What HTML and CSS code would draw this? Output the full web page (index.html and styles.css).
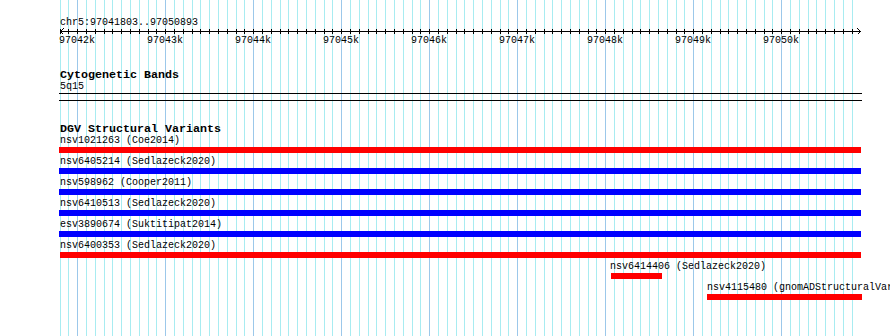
FILE: index.html
```html
<!DOCTYPE html>
<html lang="en">
<head>
    <meta charset="UTF-8">
    <meta name="viewport" content="width=device-width, initial-scale=1.0">
    <title>chr5:97041803..97050893</title>
    <link rel="stylesheet" href="styles.css">
</head>
<body>
    <div class="view">
        <div class="grid" id="grid"></div>

        <div class="ruler">
            <div class="locus">chr5:97041803..97050893</div>
            <svg class="scale" id="scale" width="890" height="7"></svg>
            <div class="scale-labels" id="scaleLabels"></div>
        </div>

        <div class="track bands">
            <div class="track-title">Cytogenetic Bands</div>
            <div class="band-name">5q15</div>
            <div class="band"></div>
        </div>

        <div class="track dgv">
            <div class="track-title">DGV Structural Variants</div>
            <div class="feature">
                <div class="feature-label">nsv1021263 (Coe2014)</div>
                <div class="bar loss" style="margin-left:-1px; width:802px"></div>
            </div>
            <div class="feature">
                <div class="feature-label">nsv6405214 (Sedlazeck2020)</div>
                <div class="bar gain" style="margin-left:-1px; width:802px"></div>
            </div>
            <div class="feature">
                <div class="feature-label">nsv598962 (Cooper2011)</div>
                <div class="bar gain" style="margin-left:-1px; width:802px"></div>
            </div>
            <div class="feature">
                <div class="feature-label">nsv6410513 (Sedlazeck2020)</div>
                <div class="bar gain" style="margin-left:-1px; width:802px"></div>
            </div>
            <div class="feature">
                <div class="feature-label">esv3890674 (Suktitipat2014)</div>
                <div class="bar gain" style="margin-left:-1px; width:802px"></div>
            </div>
            <div class="feature">
                <div class="feature-label">nsv6400353 (Sedlazeck2020)</div>
                <div class="bar loss" style="margin-left:0; width:801px"></div>
            </div>
            <div class="feature">
                <div class="feature-label" style="margin-left:550px">nsv6414406 (Sedlazeck2020)</div>
                <div class="bar loss" style="margin-left:551px; width:51px"></div>
            </div>
            <div class="feature">
                <div class="feature-label" style="margin-left:647px">nsv4115480 (gnomADStructuralVariants)</div>
                <div class="bar loss" style="margin-left:647px; width:155px"></div>
            </div>
        </div>
    </div>

    <script>
        // view: 97041800 sits at x=60, 0.088 px per bp
        const START = 97041800;
        const END = 97050893;
        const LEFT = 60;
        const SCALE = 0.088;

        function toX(bp) {
            return Math.floor(LEFT + (bp - START) * SCALE);
        }

        const grid = document.getElementById('grid');
        const scale = document.getElementById('scale');
        const labels = document.getElementById('scaleLabels');
        const ns = 'http://www.w3.org/2000/svg';

        function rect(x, y, w, h) {
            const r = document.createElementNS(ns, 'rect');
            r.setAttribute('x', x);
            r.setAttribute('y', y);
            r.setAttribute('width', w);
            r.setAttribute('height', h);
            scale.appendChild(r);
        }

        rect(LEFT, 3, 801, 1);

        for (let bp = START; bp <= END; bp += 100) {
            const x = toX(bp);
            const major = bp % 1000 === 0;

            const line = document.createElement('div');
            line.className = major ? 'grid-line major' : 'grid-line';
            line.style.left = x + 'px';
            grid.appendChild(line);

            rect(x, 1, 1, 5);

            if (major) {
                const label = document.createElement('span');
                label.className = 'scale-label';
                label.innerText = (bp / 1000) + 'k';
                label.style.left = (x - 18) + 'px';
                labels.appendChild(label);
            }
        }

        const arrows = document.createElementNS(ns, 'path');
        arrows.setAttribute('d', 'M63.5 0.5 L60.5 3.5 L63.5 6.5 M857.5 0.5 L860.5 3.5 L857.5 6.5');
        arrows.setAttribute('class', 'arrow');
        scale.appendChild(arrows);
    </script>
</body>
</html>
```

FILE: styles.css
```css
body {
    margin: 0;
    background-color: #FFFFFF;
    color: #000000;
    font-family: "Liberation Mono", "DejaVu Sans Mono", monospace;
    font-size: 10px;
}
.view {
    position: relative;
    width: 890px;
    height: 336px;
    overflow: hidden;
}
.grid {
    position: absolute;
    top: 0;
    left: 0;
    right: 0;
    bottom: 0;
}
.grid-line {
    position: absolute;
    top: 0;
    bottom: 0;
    width: 1px;
    background-color: #a8ecf1;
}
.grid-line.major {
    background-color: #9cc8ea;
}
.ruler, .track {
    position: relative;
    padding-left: 60px;
}
.locus {
    margin-top: 17px;
    line-height: 11px;
    height: 11px;
    white-space: nowrap;
}
.scale {
    display: block;
    margin-left: -60px;
    shape-rendering: crispEdges;
}
.scale rect {
    fill: #000000;
}
.scale .arrow {
    fill: none;
    stroke: #000000;
    stroke-width: 1;
}
.scale-labels {
    position: relative;
    margin-left: -60px;
    height: 11px;
    line-height: 11px;
}
.scale-label {
    position: absolute;
    top: 0;
    white-space: nowrap;
}
.track-title {
    font-weight: bold;
    font-size: 11.67px;
    line-height: 12px;
    height: 12px;
    white-space: nowrap;
}
.bands {
    margin-top: 23px;
}
.band-name {
    line-height: 11px;
    height: 12px;
}
.band {
    margin-left: -1px;
    width: 803px;
    height: 6px;
    border-top: 1px solid #000000;
    border-bottom: 1px solid #000000;
}
.dgv {
    margin-top: 22px;
}
.feature {
    display: flex;
    flex-direction: column;
}
.feature-label {
    line-height: 11px;
    height: 11px;
    white-space: nowrap;
}
.bar {
    margin-top: 1px;
    margin-bottom: 3px;
    height: 6px;
}
.bar.loss {
    background-color: #FF0000;
}
.bar.gain {
    background-color: #0000FF;
}
```
